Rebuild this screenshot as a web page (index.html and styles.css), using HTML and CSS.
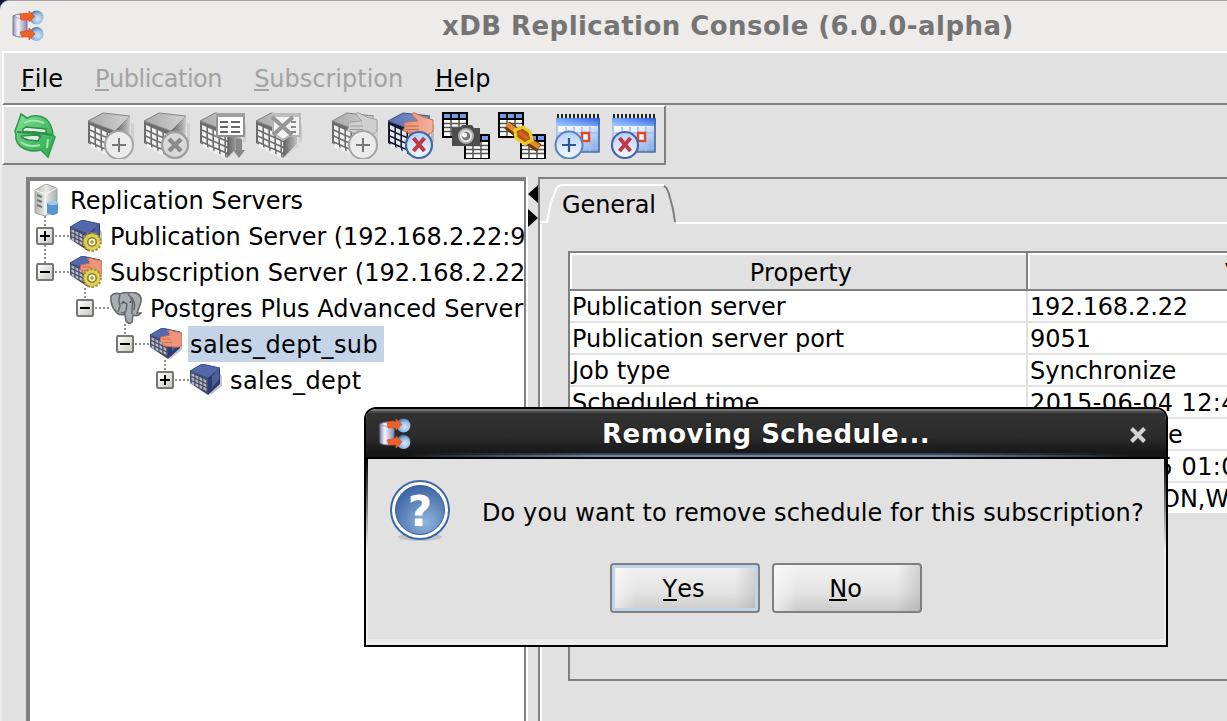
FILE: index.html
```html
<!DOCTYPE html>
<html lang="en">
<head>
<meta charset="utf-8">
<title>xDB Replication Console</title>
<link rel="stylesheet" href="styles.css">
</head>
<body>
<svg class="defs" aria-hidden="true">
  <defs>
    <linearGradient id="cyl"><stop offset="0" stop-color="#8a8bab"/><stop offset=".35" stop-color="#f5f5ff"/><stop offset="1" stop-color="#8988ad"/></linearGradient>
    <radialGradient id="ball" cx=".6" cy=".6" r=".6"><stop offset="0" stop-color="#d4e9fb"/><stop offset=".6" stop-color="#9bbce0"/><stop offset="1" stop-color="#5478ad"/></radialGradient>
    <linearGradient id="grayTop" x1="0" x2="1"><stop offset="0" stop-color="#a8a8a8"/><stop offset="1" stop-color="#d2d2d2"/></linearGradient>
    <linearGradient id="grayRight" x1="0" x2="1"><stop offset="0" stop-color="#606060"/><stop offset="1" stop-color="#c8c8c8"/></linearGradient>
    <linearGradient id="blueTop" x1="0" x2="1"><stop offset="0" stop-color="#5b70ae"/><stop offset="1" stop-color="#8498d4"/></linearGradient>
    <linearGradient id="blueRight" x1="0" x2="1"><stop offset="0" stop-color="#172140"/><stop offset="1" stop-color="#6878ac"/></linearGradient>
    <linearGradient id="cal" x1="0" y1="0" x2="1" y2="1"><stop offset="0" stop-color="#ffffff"/><stop offset=".5" stop-color="#e2edfd"/><stop offset="1" stop-color="#7ba0e0"/></linearGradient>
    <linearGradient id="calHead" x1="0" y1="1" x2="1" y2="0"><stop offset="0" stop-color="#a6cbff"/><stop offset=".5" stop-color="#6f9df4"/><stop offset="1" stop-color="#2d5be0"/></linearGradient>
    <linearGradient id="badgeBlue" x1="0" y1="0" x2="0" y2="1"><stop offset="0" stop-color="#b5d0f6"/><stop offset="1" stop-color="#f4faff"/></linearGradient>
    <linearGradient id="green" x1="0" y1="0" x2="1" y2="1"><stop offset="0" stop-color="#8adf9c"/><stop offset=".5" stop-color="#4fc26c"/><stop offset="1" stop-color="#2fa84d"/></linearGradient>
    <linearGradient id="skin"><stop offset="0" stop-color="#e8906f"/><stop offset="1" stop-color="#f3b39d"/></linearGradient>
    <linearGradient id="tower"><stop offset="0" stop-color="#b4b8b3"/><stop offset=".5" stop-color="#e8eae6"/><stop offset="1" stop-color="#a9aea9"/></linearGradient>
    <radialGradient id="question" cx=".6" cy=".75" r=".75"><stop offset="0" stop-color="#8fb4dc"/><stop offset="1" stop-color="#3b65a4"/></radialGradient>
  </defs>
  <symbol id="app" viewBox="0 0 34 32">
    <circle cx="25.5" cy="7.5" r="7" fill="url(#ball)"/><circle cx="25.5" cy="24" r="7" fill="url(#ball)"/>
    <path d="M2 6Q9 2 16 6V25Q9 29 2 25Z" fill="url(#cyl)" stroke="#7d7ba0"/>
    <path d="M3 7Q9 10 15 7" fill="none" stroke="#a8a8c5"/>
    <path d="M9 4L15 3 18 4V1L24 6.5 18 12V10H10ZM9 22L18 20V18L24 24 18 30V27L11 27Z" fill="#ec6129" stroke="#d65422" stroke-width=".7"/>
  </symbol>
  <symbol id="cells" viewBox="0 0 48 48">
    <g transform="matrix(6 2.65 0 6 4 13.2)" stroke-width=".72" stroke-dasharray=".74 .26"><path d="M0 .5H4.2M0 1.5H4.2M0 2.5H4.2M.1 3.5H4.2"/></g>
  </symbol>
  <symbol id="cube-gray" viewBox="0 0 48 48">
    <path d="M30 47L45 35V11L48 14V30Z" fill="#cfcfcf"/>
    <path d="M2 10L29 20V47L2 32Z" fill="#6c6c6c"/>
    <path d="M2 10L17 2 44 5 29 20Z" fill="url(#grayTop)" stroke="#858585"/>
    <path d="M29 20L44 5 43 33 29 47Z" fill="url(#grayRight)"/>
    <use href="#cells" stroke="#f0f0f0"/>
  </symbol>
  <symbol id="cube-blue" viewBox="0 0 48 48">
    <path d="M30 47L45 35V11L48 14V30Z" fill="#b9bac2"/>
    <path d="M2 10L29 20V47L2 32Z" fill="#141a2c"/>
    <path d="M2 10L17 2 44 5 29 20Z" fill="url(#blueTop)" stroke="#3f4f86"/>
    <path d="M29 20L44 5 43 33 29 47Z" fill="url(#blueRight)"/>
    <use href="#cells" stroke="#e6e8f0"/>
  </symbol>
  <symbol id="cube-small" viewBox="0 0 32 32">
    <path d="M19 32L32 22V12L29 8Z" fill="#c4c5cb"/>
    <path d="M0 7L18 14V31L0 19Z" fill="#454c66"/>
    <path d="M0 7L12 0 30 4 18 14Z" fill="#5268ab" stroke="#3a4c86"/>
    <path d="M18 14L30 4V20L18 31Z" fill="#2d3b70"/>
    <path d="M22 12L29 5V15L22 24Z" fill="#4d5f99"/>
    <g transform="matrix(4 1.9 0 4 1.5 9)" stroke="#b5b8c4" stroke-width=".66" stroke-dasharray=".7 .3"><path d="M0 .4H4M0 1.4H4M0 2.4H4"/></g>
  </symbol>
  <symbol id="hand" viewBox="0 0 48 48">
    <path d="M18 14Q18 11 21 11L32 10 27 5Q25 1 29 2L35 5Q38 7 41 7L47 9V20Q44 24 40 24L26 24Q21 23 22 21L18 20Q16 18 19 17Z" fill="url(#skin)" stroke="#c47258"/>
    <path d="M20 15H33M20 18.5H33M23 22H33" stroke="#c1684e" fill="none"/>
  </symbol>
  <symbol id="hand-gray" viewBox="0 0 48 48">
    <path d="M18 14Q18 11 21 11L32 10 27 5Q25 1 29 2L35 5Q38 7 41 7L47 9V20Q44 24 40 24L26 24Q21 23 22 21L18 20Q16 18 19 17Z" fill="#cfcfcf" stroke="#a0a0a0"/>
    <path d="M20 15H33M20 18.5H33M23 22H33" stroke="#9a9a9a" fill="none"/>
  </symbol>
  <symbol id="hand-small" viewBox="0 0 32 32">
    <path d="M11 9L20 7 18 3Q20 1 23 3L32 5V17Q29 20 24 19L15 18Q11 17 13 15L10 13Z" fill="#ee9478" stroke="#c96f55"/>
    <path d="M13 11H21M14 14.5H22" stroke="#c96c52"/>
  </symbol>
  <symbol id="gear" viewBox="0 0 32 32">
    <circle cx="22" cy="22" r="8.7" fill="#d9cc52" stroke="#a4922e" stroke-width="2.4" stroke-dasharray="2.3 1.6"/>
    <circle cx="22" cy="22" r="7.8" fill="#ddd15c"/>
    <circle cx="22" cy="22" r="4.2" fill="#fffbd9" stroke="#8d7f27" stroke-width="1.6"/><path d="M20 22H24M22 20V24" stroke="#a99b3a" stroke-width="1.5"/>
  </symbol>
  <symbol id="table" viewBox="0 0 26 26">
    <path d="M0 0H26V26H0Z" fill="#000"/><path d="M2 2H8V6H2ZM10 2H16V6H10ZM18 2H24V6H18Z" fill="#6f9be6"/>
    <path d="M2 8H24V24H2Z" fill="#fff"/><path d="M2 11.5H24M2 15.5H24M2 19.5H24M9 8V24M17 8V24" stroke="#555" stroke-width="1.5"/>
  </symbol>
  <symbol id="calendar" viewBox="0 0 48 48">
    <path d="M3 8H45V40H3Z" fill="url(#cal)" stroke="#7b9fd6"/><path d="M2 7H46V15H2Z" fill="url(#calHead)"/>
    <path d="M3 5H46" stroke="#222" stroke-width="4" stroke-dasharray="2 2"/>
    <path d="M4 22H44M4 30H44M4 37H44M12 16V40M20 16V40M28 16V40M36 16V40" stroke="#a3bfea" stroke-width="1.5"/>
    <path d="M45 9V41H3" stroke="#4a6fa6" stroke-width="1.6" fill="none"/>
    <path d="M28 22H35V30H28Z" fill="#eef4ff" stroke="#e24a25" stroke-width="2.4"/>
  </symbol>
  <symbol id="badge-add-gray" viewBox="0 0 48 48"><circle cx="33" cy="34" r="14" fill="#ebebeb" stroke="#a4a4a4" stroke-width="2"/><path d="M26 34H40M33 27V41" stroke="#777" stroke-width="2"/></symbol>
  <symbol id="badge-del-gray" viewBox="0 0 48 48"><circle cx="33" cy="34" r="13" fill="#d9d9d9" stroke="#a0a0a0" stroke-width="2.4"/><path d="M27 28L39 40M39 28L27 40" stroke="#8b8b8b" stroke-width="4.5"/></symbol>
  <symbol id="badge-add" viewBox="0 0 48 48"><circle cx="15" cy="34" r="13.5" fill="url(#badgeBlue)" stroke="#5a83bf" stroke-width="2"/><path d="M8 34H22M15 27V41" stroke="#2f5794" stroke-width="2.2"/></symbol>
  <symbol id="badge-del" viewBox="0 0 48 48"><circle cx="15" cy="34" r="13" fill="url(#badgeBlue)" stroke="#4468a6" stroke-width="2.2"/><path d="M9.5 27L20.5 40M20.5 27L9.5 40" stroke="#c23a45" stroke-width="4"/></symbol>
  <symbol id="elephant" viewBox="0 0 32 32">
    <path d="M1 4Q4 0 10 2 14 0 18 1 23 -1 28 2 33 5 30 13L27 21 31 21Q28 25 23 23L22 30Q19 33 16 29L15 22Q11 24 7 21 0 14 1 4Z" fill="#a9adb1" stroke="#666b70" stroke-width="1.6"/>
    <path d="M10 3Q8 8 10 14L8 20M18 2Q24 8 22 15L22 22M11 12Q14 9 17 12L16 19Q14 22 11 20M21 5Q26 10 24 18" fill="none" stroke="#62676b" stroke-width="1.5"/><circle cx="13.5" cy="10" r="1" fill="#444"/><circle cx="20.5" cy="10" r="1" fill="#444"/>
  </symbol>
</svg>

<div class="window">
  <header class="titlebar"><svg class="app-icon" viewBox="0 0 34 32"><use href="#app"/></svg><h1 class="window-title">xDB Replication Console (6.0.0-alpha)</h1></header>
  <div class="client">
    <nav class="menubar">
      <span class="menu m-file"><u>F</u>ile</span><span class="menu off m-pub"><u>P</u>ublication</span><span class="menu off m-sub"><u>S</u>ubscription</span><span class="menu m-help"><u>H</u>elp</span>
    </nav>
    <div class="toolbar">
      <svg class="tool refresh" viewBox="0 0 48 48"><path d="M9 3L15 7Q25 2 34 8 40 13 41 24L43 26 36 46 29 39Q17 42 8 35 3 30 4 24L3 20 6 12Z" fill="url(#green)" stroke="#2f9a4a" stroke-width="1.6"/><path d="M14 16L34 18V22L20 21Q14 20 11 21V18ZM9 25L25 24 28 26 26 30 17 29Q11 28 9 25Z" fill="#dff0e2" stroke="#2f8d49" stroke-width="1.4"/><path d="M5 21L26 23 29 26M20 21L40 24" fill="none" stroke="#2c9047" stroke-width="1.8"/><path d="M12 12Q21 7 32 12M9 31Q17 37 28 34M36 28L35 37" stroke="#a5e8b3" stroke-width="2" fill="none"/></svg>
      <svg class="tool first" viewBox="0 0 48 48"><use href="#cube-gray"/><use href="#badge-add-gray"/></svg>
      <svg class="tool" viewBox="0 0 48 48"><use href="#cube-gray"/><use href="#badge-del-gray"/></svg>
      <svg class="tool" viewBox="0 0 48 48"><use href="#cube-gray"/><path d="M19 4H46V25H19Z" fill="#fdfdfd" stroke="#929292" stroke-width="2"/><path d="M18 2H47V6H18Z" fill="#a0a0a0"/><path d="M22 11H30M33 11H42M22 16H30M33 16H42M22 21H30M33 21H42" stroke="#666" stroke-width="2"/><path d="M38 28H44V39H47L41 47 35 39H38Z" fill="#888"/></svg>
      <svg class="tool" viewBox="0 0 48 48"><use href="#cube-gray"/><path d="M19 4H46V25H35L29 29 19 22Z" fill="#f3f3f3" stroke="#b5b5b5" stroke-width="2"/><path d="M18 2H47V6H18Z" fill="#bcbcbc"/><path d="M37 11H42M37 16H42M37 21H42" stroke="#888" stroke-width="2"/><path d="M18 6L38 24M39 6L19 24" stroke="#979797" stroke-width="4"/></svg>
      <svg class="tool second" viewBox="0 0 48 48"><use href="#cube-gray"/><use href="#hand-gray"/><use href="#badge-add-gray"/></svg>
      <svg class="tool" viewBox="0 0 48 48"><use href="#cube-blue"/><use href="#hand"/><use href="#badge-del" x="18"/></svg>
      <svg class="tool" viewBox="0 0 48 48"><use href="#table" width="26" height="26" y="1"/><use href="#table" x="22" y="23" width="26" height="26"/><path d="M10 17H18L20 14H30L32 17H38V35H10Z" fill="#4d4d4d"/><circle cx="24" cy="25" r="8" fill="#aaa"/><circle cx="24" cy="25" r="5.2" fill="#777" stroke="#e3e3e3" stroke-width="2"/><circle cx="22.5" cy="24" r="2.5" fill="#fff"/></svg>
      <svg class="tool" viewBox="0 0 48 48"><use href="#table" width="26" height="26" y="1"/><use href="#table" x="22" y="23" width="26" height="26"/><path d="M9 14L26 27 41 37" fill="none" stroke="#6b3a0b" stroke-width="9"/><path d="M9 13L26 26 41 36" fill="none" stroke="#e08a30" stroke-width="5"/><path d="M17 19L25 16 32 21 34 29 27 33 18 27Z" fill="#a85b0c" stroke="#e9cb2a" stroke-width="3.2"/><path d="M21 21L30 28" stroke="#dd5f22" stroke-width="4"/></svg>
      <svg class="tool" viewBox="0 0 48 48"><use href="#calendar"/><use href="#badge-add"/></svg>
      <svg class="tool" viewBox="0 0 48 48"><use href="#calendar"/><use href="#badge-del"/></svg>
    </div>
    <main class="split">
      <section class="tree">
        <div class="node root"><svg class="icon" viewBox="0 0 32 32"><path d="M2 6L13 0 24 4V26L12 32 2 29Z" fill="url(#tower)" stroke="#9da19d"/><path d="M2 6L12 10 24 4M12 10V31" fill="none" stroke="#fafafa"/><path d="M4 11L9 13M4 16L9 18M4 21L9 23" stroke="#6f7774" stroke-width="2"/><path d="M14 19Q20 16 25 19V29Q20 33 14 29Z" fill="#5794d0"/><ellipse cx="19.5" cy="19" rx="5.5" ry="2" fill="#a3caee"/></svg><span class="label">Replication Servers</span></div>
        <div class="node l1"><i class="knob plus"></i><i class="dots"></i><svg class="icon" viewBox="0 0 32 32"><use href="#cube-small"/><use href="#gear"/></svg><span class="label pub">Publication Server (192.168.2.22:9051)</span></div>
        <div class="node l1"><i class="knob"></i><i class="dots"></i><svg class="icon" viewBox="0 0 32 32"><use href="#cube-small"/><use href="#hand-small"/><use href="#gear"/></svg><span class="label">Subscription Server (192.168.2.22:9052)</span></div>
        <div class="node l2"><i class="knob"></i><i class="dots"></i><svg class="icon" viewBox="0 0 32 32"><use href="#elephant"/></svg><span class="label pg">Postgres Plus Advanced Server</span></div>
        <div class="node l3"><i class="knob"></i><i class="dots"></i><svg class="icon" viewBox="0 0 32 32"><use href="#cube-small"/><use href="#hand-small"/></svg><span class="label wide selected">sales_dept_sub</span></div>
        <div class="node l4"><i class="knob plus"></i><i class="dots"></i><svg class="icon" viewBox="0 0 32 32"><use href="#cube-small"/></svg><span class="label wide">sales_dept</span></div>
      </section>
      <div class="divider"><svg class="arrows" viewBox="0 0 10 42"><path d="M10 0V18L0 9ZM0 24V42L10 33Z"/></svg></div>
      <section class="details">
        <div class="tabs"><svg class="tab-shape" viewBox="0 0 136 40"><path d="M0 38H7L9 28 11 18 15 8Q17 1 22 1H124" fill="none" stroke="#fff" stroke-width="2"/><path d="M124 2Q128 4 130 14L133 25 135 38" fill="none" stroke="#808080" stroke-width="2"/></svg><span class="tab-label">General</span></div>
        <div class="tab-body">
          <div class="grid">
            <div class="th">Property</div><div class="th th-value">Value</div>
            <div class="td pub">Publication server</div><div class="td ip">192.168.2.22</div>
            <div class="td">Publication server port</div><div class="td">9051</div>
            <div class="td">Job type</div><div class="td">Synchronize</div>
            <div class="td">Scheduled time</div><div class="td date">2015-06-04 12:45:00</div>
            <div class="td"></div><div class="td frag-e">e</div>
            <div class="td"></div><div class="td date">2015-06-05 01:00:00</div>
            <div class="td"></div><div class="td frag-on">ON,WED</div>
          </div>
        </div>
      </section>
    </main>
  </div>
</div>

<div class="dialog">
  <div class="dialog-title"><svg class="app-icon" viewBox="0 0 34 32"><use href="#app"/></svg><h2 class="dialog-name">Removing Schedule...</h2><svg class="close" viewBox="0 0 18 18"><path d="M2.5 2.5L15.5 15.5M15.5 2.5L2.5 15.5" stroke="#d2d2d2" stroke-width="4"/></svg></div>
  <div class="dialog-frame">
    <div class="dialog-body">
      <div class="message"><svg class="question" viewBox="0 0 62 62"><ellipse cx="31" cy="57" rx="22" ry="4" fill="#c4c4c4"/><circle cx="31" cy="30" r="29" fill="#fff" stroke="#3d68a6" stroke-width="2"/><circle cx="31" cy="30" r="24.5" fill="url(#question)" stroke="#355f9e"/><text x="31" y="46" text-anchor="middle" class="qmark">?</text></svg><span class="message-text">Do you want to remove schedule for this subscription?</span></div>
      <div class="actions"><button class="btn default"><u>Y</u>es</button><button class="btn"><u>N</u>o</button></div>
    </div>
  </div>
</div>
</body>
</html>
```
FILE: styles.css
```css
* { box-sizing: border-box; }
body { margin: 0; width: 1227px; height: 721px; overflow: hidden; position: relative; background: #0b1440; color: #000; font: 24px/32px "DejaVu Sans", sans-serif; white-space: nowrap; }
.defs { position: absolute; width: 0; height: 0; }
u { text-decoration: none; border-bottom: 2px solid currentColor; display: inline-block; line-height: 26px; height: 25px; }
.window { width: 1227px; height: 721px; display: flex; flex-direction: column; background: #edecea; border-top: 1px solid #a5a5a4; border-radius: 9px 0 0 0; }
.titlebar { height: 50px; display: flex; align-items: center; padding-left: 11px; flex: none; }
.app-icon { width: 34px; height: 32px; display: block; }
.window-title { margin: 0 0 0 397px; font: bold 26px/32px "DejaVu Sans", sans-serif; color: #757575; letter-spacing: .45px; }
.client { margin-left: 2px; flex: 1; min-height: 0; background: #e1e1e1; display: flex; flex-direction: column; }
.menubar { height: 54px; flex: none; border-top: 2px solid #fff; border-left: 2px solid #fff; border-bottom: 2px solid #808080; display: flex; align-items: center; padding: 2px 0 0 17px; gap: 32px; }
.off { color: #a3a3a3; }
.m-pub { letter-spacing: -.45px; }
.m-help { letter-spacing: .2px; }
.toolbar { width: 664px; height: 60px; flex: none; border: 2px solid #808080; border-top-color: #fff; border-left-color: #fff; display: flex; align-items: center; padding: 0 0 0 8px; gap: 8px; }
.tool { width: 48px; height: 48px; flex: none; }
.first { margin-left: 18px; }
.second { margin-left: 20px; }
.split { margin: 12px 0 0 24px; flex: 1; min-height: 0; display: flex; }
.tree { width: 500px; flex: none; background: #fff; border: 4px solid #808080; border-right-width: 2px; border-bottom: 0; overflow: hidden; padding-top: 1px; }
.node { height: 36px; display: flex; align-items: center; }
.root { padding-left: 3px; }
.l1 { padding-left: 6px; }
.l2 { padding-left: 46px; }
.l3 { padding-left: 86px; }
.l4 { padding-left: 126px; }
.knob { width: 18px; height: 18px; flex: none; border: 2px solid #777; border-radius: 2px; background: linear-gradient(#000, #000) center/10px 2px no-repeat, linear-gradient(135deg, #fff, #cbc8c0); position: relative; }
.plus { background: linear-gradient(#000, #000) center/10px 2px no-repeat, linear-gradient(#000, #000) center/2px 10px no-repeat, linear-gradient(135deg, #fff, #cbc8c0); }
.knob::before { content: ""; position: absolute; left: 6px; bottom: 16px; width: 2px; height: 11px; background: repeating-linear-gradient(#909090 0 2px, #fff 2px 4px); }
.l1 + .l1 .knob::before { height: 18px; }
.dots { width: 16px; height: 2px; flex: none; background: repeating-linear-gradient(90deg, #fff 0 1px, #909090 1px 3px, #fff 3px 4px); }
.icon { width: 32px; height: 32px; flex: none; }
.label { margin-left: 6px; height: 36px; line-height: 38px; padding: 0 6px 0 2px; letter-spacing: .08px; }
.root .label { margin-left: 3px; }
.pub { letter-spacing: -.1px; }
.wide { letter-spacing: .38px; }
.selected { background: #c3d3e8; }
.divider { width: 12px; flex: none; border-left: 2px solid #fff; padding-top: 8px; }
.arrows { display: block; width: 10px; height: 42px; }
.details { flex: 1; min-width: 0; border-left: 2px solid #808080; border-top: 2px solid #808080; display: flex; flex-direction: column; }
.tabs { height: 45px; flex: none; display: flex; align-items: flex-end; background: linear-gradient(#fff, #fff) 136px 43px/100% 2px no-repeat; }
.tab-shape { width: 136px; height: 40px; flex: none; }
.tab-label { margin: 0 0 3px -114px; letter-spacing: -.1px; }
.tab-body { flex: 1; min-height: 0; border-left: 2px solid #fff; padding: 27px 0 0 26px; }
.grid { height: 430px; border: 2px solid #808080; border-right: 0; display: grid; grid-template-columns: 458px 1fr; grid-template-rows: 38px; grid-auto-rows: 32px; overflow: hidden; }
.th { border-right: 2px solid #808080; border-bottom: 2px solid #808080; box-shadow: inset 2px 2px #fff; text-align: center; line-height: 40px; padding-left: 6px; letter-spacing: .1px; }
.th-value { border-right: 0; text-align: left; padding-left: 197px; }
.td { background: #fff; border-bottom: 2px solid #e1e1e1; border-right: 2px solid #e1e1e1; padding-left: 2px; line-height: 33px; overflow: hidden; }
.ip { letter-spacing: -.2px; }
.date { letter-spacing: .4px; }
.frag-e { padding-left: 140px; }
.frag-on { padding-left: 133px; }

.dialog { position: absolute; left: 364px; top: 407px; width: 804px; height: 240px; border: 2px solid #000; border-radius: 12px 12px 0 0; overflow: hidden; display: flex; flex-direction: column; background: #edecea; }
.dialog-title { height: 50px; flex: none; display: flex; align-items: center; padding: 3px 19px 3px 12px; background: linear-gradient(#000, #000) 0 100%/100% 2px no-repeat, linear-gradient(90deg, transparent 5%, #6c87a7 28% 72%, transparent 96%) 0 46px/100% 2px no-repeat, linear-gradient(90deg, transparent 5%, #394656 28% 72%, transparent 96%) 0 44px/100% 2px no-repeat, linear-gradient(#747474 0 2px, #484848 2px 4px, #323232 4px, #2b2b2b 28px, #171717 44px); }
.dialog-name { flex: 1; margin: 0 0 0 190px; color: #fff; font: bold 26px/32px "DejaVu Sans", sans-serif; text-shadow: 0 0 2px #000; letter-spacing: .5px; }
.close { width: 18px; height: 18px; margin-top: 2px; }
.dialog-frame { flex: 1; padding: 0 2px 6px; background: linear-gradient(#000, #edecea 90px); }
.dialog-body { height: 180px; background: #e1e1e1; display: flex; flex-direction: column; }
.message { height: 81px; margin-top: 22px; padding-left: 21px; display: flex; align-items: flex-start; }
.question { width: 62px; height: 62px; margin-top: -1px; }
.qmark { font: bold 42px "DejaVu Sans", sans-serif; fill: #fff; }
.message-text { margin: 16px 0 0 31px; letter-spacing: .11px; }
.actions { display: flex; gap: 12px; padding-left: 242px; }
.btn { width: 150px; height: 50px; margin: 1px 0 0; border: 2px solid #808080; border-radius: 4px; font: inherit; color: inherit; padding: 2px 3px 0 0; background: linear-gradient(90deg, rgba(255,255,255,.6), transparent 16% 84%, rgba(120,120,120,.25)), linear-gradient(#f2f2f2, #e3e3e3 60%, #cbcbcb); }
.default { box-shadow: inset 0 0 0 3px #c2d4ea; }
```
